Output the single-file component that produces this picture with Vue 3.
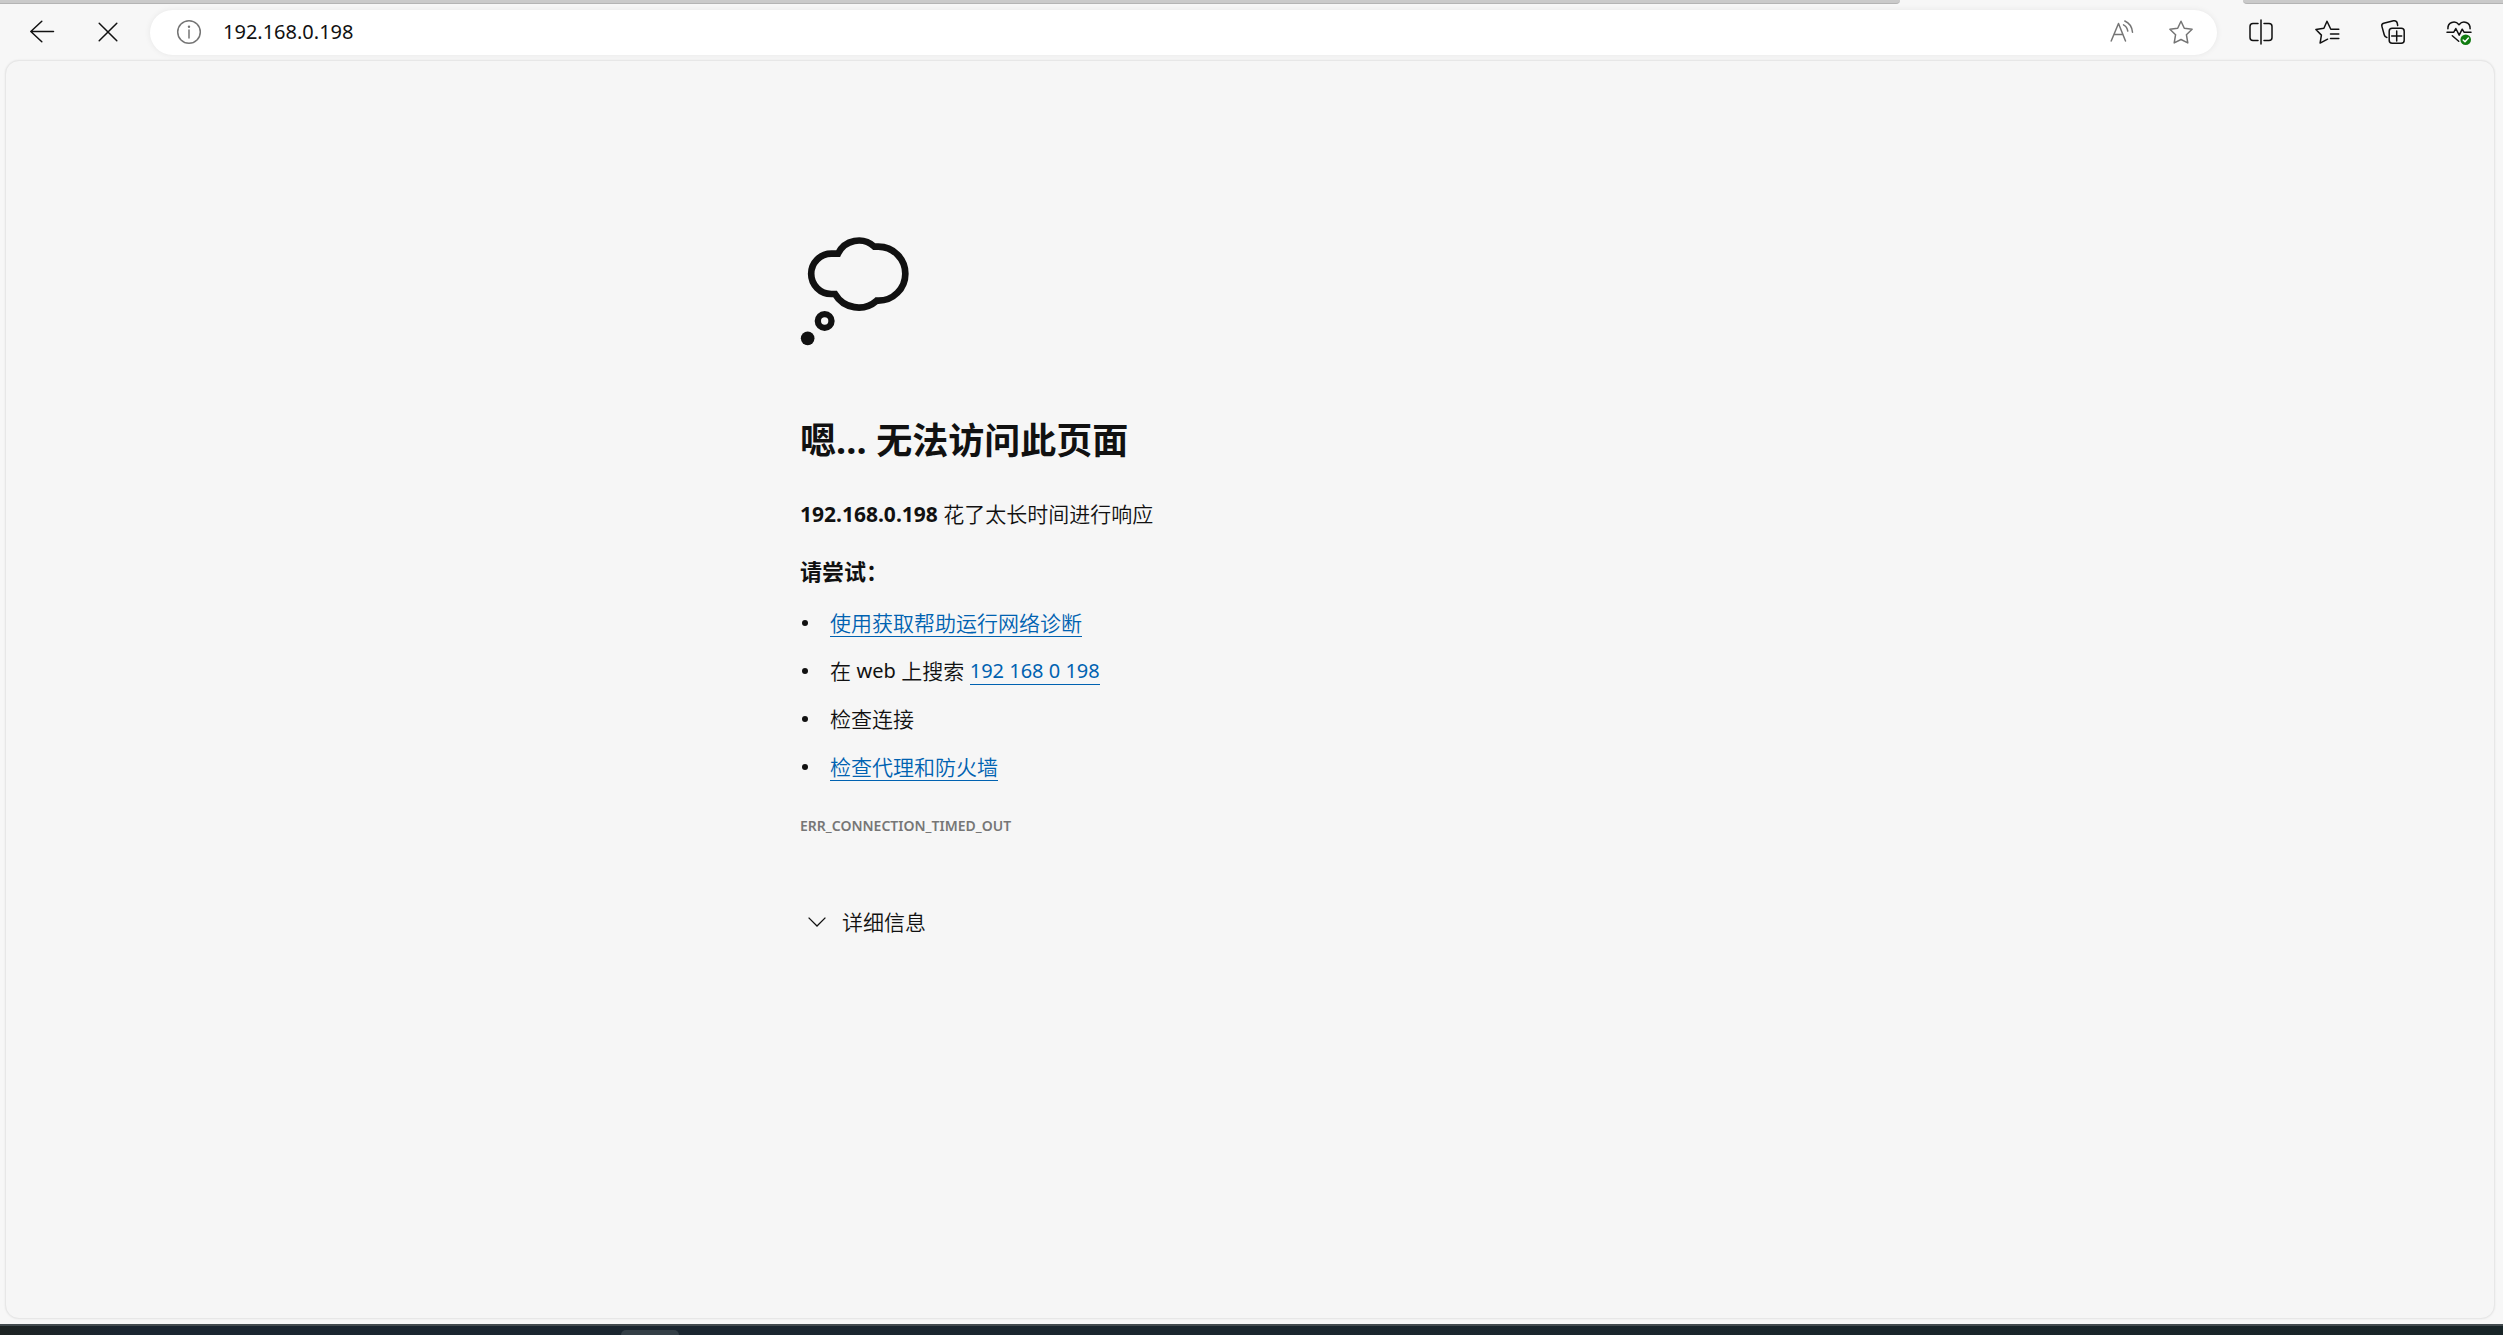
<script setup>
import { ref } from 'vue'

const address = ref('192.168.0.198')
</script>

<template>
  <div class="browser">
    <div class="tabstrip">
      <div class="tabs tabs-before"></div>
      <div class="tab-active"></div>
      <div class="tabs tabs-after"></div>
    </div>

    <header class="toolbar">
      <button class="tool" aria-label="返回">
        <svg class="icon" viewBox="0 0 24 24"><path d="M23.5 11.5H.8M11.8 1.2L.8 11.5l11 10.3" /></svg>
      </button>
      <button class="tool" aria-label="停止">
        <svg class="icon" viewBox="0 0 24 24"><path d="M3.2 3.2l17.6 17.6M20.8 3.2L3.2 20.8" /></svg>
      </button>

      <div class="address">
        <button class="address-tool" aria-label="网站信息">
          <svg class="icon gray" viewBox="0 0 24 24"><circle cx="12" cy="12" r="11.3" /><path d="M12 10v8" /><circle class="dot" cx="12" cy="6.8" r="1.2" /></svg>
        </button>
        <input v-model="address" class="url" type="text" aria-label="地址栏" />
        <button class="address-tool" aria-label="大声朗读">
          <svg class="icon gray" viewBox="0 0 24 24"><path d="M1.2 21L8.5 3.5 15.5 21M4 14.500h9M13.500 4.800c2.300 1.200 3.900 3.500 4.300 6.300M14.800 1c4.200 1.800 7.200 6 7.700 11.200" /></svg>
        </button>
        <button class="address-tool" aria-label="收藏此页">
          <svg class="icon gray" viewBox="0 0 24 24"><path d="M12 1.200l3.300 7 7.800 1.100-5.700 5.400 1.400 8.200-6.800-3.400-6.800 3.400 1.400-8.200L.9 9.300l7.800-1.100z" /></svg>
        </button>
      </div>

      <button class="tool" aria-label="分屏">
        <svg class="icon" viewBox="0 0 24 24"><path d="M12 0v24M9 3.500H4a3 3 0 0 0-3 3v11a3 3 0 0 0 3 3h5M15 3.500h5a3 3 0 0 1 3 3v11a3 3 0 0 1-3 3h-5" /></svg>
      </button>
      <button class="tool" aria-label="收藏夹">
        <svg class="icon" viewBox="0 0 24 24"><path d="M23.800 9.200H15.800L12 1.200 8.900 8.200.9 9.500l5.500 5.600-1.300 8 7.500-3.900M15.500 14h8.300M15.500 18.500h8.300" /></svg>
      </button>
      <button class="tool" aria-label="集锦">
        <svg class="icon" viewBox="0 0 24 24"><path d="M5.900 17.500C4.500 17.300 3.700 16.500 3.300 15L.9 6.400C.5 4.900 1.200 3.700 2.700 3.300L12.500.8c2-.4 3.200.4 3.700 2.200l.5 2.500" /><rect x="8.200" y="8.300" width="15" height="15" rx="3" /><path d="M15.700 11v10M10.700 16h10" /></svg>
      </button>
      <button class="tool" aria-label="浏览器概要">
        <svg class="icon" viewBox="0 0 24 24">
          <path d="M.9 8.800C.6 2.500 7.800-.3 12 4.700 16.200-.3 23.400 2.500 23.100 8.800M0 12.200h6.800l2-3.700 3.400 6.700 3-6 1.800 3H24M5.300 15.800l6.400 5.500" />
          <circle class="badge" cx="18.700" cy="19.700" r="5.300" />
          <path class="check" d="M16.200 20l1.800 1.700 3.400-3.700" />
        </svg>
      </button>
    </header>

    <main class="page">
      <div class="content">
        <svg class="cloud" viewBox="0 0 330 330" aria-hidden="true">
          <path d="M94 53H114A69 69 0 0 1 223 32H235A81 81 0 0 1 235 194H230A82 82 0 0 1 105 174H94A60.500 60.500 0 0 1 94 53Z" />
          <circle class="ring" cx="74" cy="255" r="20.500" />
          <circle class="blob" cx="23" cy="307" r="20.500" />
        </svg>

        <h1>嗯… 无法访问此页面</h1>
        <p class="summary"><strong>192.168.0.198</strong> 花了太长时间进行响应</p>

        <h2>请尝试：</h2>
        <ul class="tips">
          <li><a href="#">使用获取帮助运行网络诊断</a></li>
          <li>在 <span class="latin">web</span> 上搜索 <a class="latin" href="#">192 168 0 198</a></li>
          <li>检查连接</li>
          <li><a href="#">检查代理和防火墙</a></li>
        </ul>

        <p class="code">ERR_CONNECTION_TIMED_OUT</p>

        <button class="details">
          <svg class="chevron" viewBox="0 0 18 10" aria-hidden="true"><path d="M.6.600L9 9l8.400-8.400" /></svg>
          详细信息
        </button>
      </div>
    </main>

    <footer class="taskbar"><span class="task"></span></footer>
  </div>
</template>

<style>
body {
  margin: 0;
  background: #f7f7f7;
}
</style>

<style scoped>
.browser {
  display: flex;
  flex-direction: column;
  min-height: 100vh;
  background: #f7f7f7;
  color: #111;
  font-family: "Noto Sans", "Noto Sans CJK SC", sans-serif;
}

button {
  padding: 0;
  border: 0;
  background: none;
  color: inherit;
  font: inherit;
}

.tabstrip {
  display: flex;
  height: 4px;
}

.tabs {
  box-sizing: border-box;
  background: #cacaca;
  border-bottom: 1px solid #b4b4b4;
}

.tabs-before {
  flex: 1;
  border-bottom-right-radius: 4px;
}

.tab-active {
  width: 343px;
}

.tabs-after {
  width: 260px;
  border-bottom-left-radius: 4px;
}

.toolbar {
  display: flex;
  align-items: center;
  height: 56px;
  padding: 0 11px 0 9px;
}

.tool,
.address-tool {
  display: flex;
  align-items: center;
  justify-content: center;
  flex: none;
  height: 45px;
}

.tool {
  width: 66px;
}

.address-tool {
  width: 59px;
}

.icon {
  width: 24px;
  height: 24px;
  fill: none;
  stroke: #111;
  stroke-width: 1.5;
  stroke-linecap: round;
  stroke-linejoin: round;
  overflow: visible;
}

.gray {
  stroke: #757575;
}

.dot {
  fill: #757575;
  stroke: none;
}

.badge {
  fill: #107c10;
  stroke: none;
}

.check {
  stroke: #fff;
}

.address {
  display: flex;
  align-items: center;
  flex: 1;
  height: 45px;
  margin: 0 11px 0 9px;
  padding: 0 7px 0 9px;
  box-sizing: border-box;
  border-radius: 23px;
  background: #fff;
  box-shadow: 0 0 6px rgba(0, 0, 0, 0.07);
}

.url {
  flex: 1;
  min-width: 0;
  padding: 0 0 0 5px;
  border: 0;
  outline: 0;
  background: none;
  color: #111;
  font: 20px/30px "Noto Sans", sans-serif;
}

.page {
  flex: 1;
  margin: 0 8px 5px 5px;
  border: 1px solid #e7e7e7;
  border-radius: 14px;
  background: #f6f6f6;
  box-shadow: 0 0 2px rgba(0, 0, 0, 0.08);
}

.content {
  max-width: 900px;
  margin: 0 auto;
  padding: 175px 0 40px;
  font-size: 21px;
  line-height: 30px;
  font-weight: 350;
}

.cloud {
  display: block;
  width: 110px;
  height: 110px;
  fill: none;
  stroke: #111;
  stroke-width: 20;
}

.ring {
  stroke-width: 19;
}

.blob {
  fill: #111;
  stroke: none;
}

h1 {
  margin: 71px 0 0;
  font-size: 36px;
  line-height: 48px;
  font-weight: 700;
}

.summary {
  margin: 34px 0 0;
}

.summary strong {
  font-weight: 700;
}

h2 {
  margin: 27px 0 0;
  font-size: 22px;
  line-height: 30px;
  font-weight: 700;
}

.tips {
  display: flex;
  flex-direction: column;
  gap: 18px;
  margin: 22px 0 0;
  padding: 0;
  list-style: none;
}

.tips li {
  display: flex;
  align-items: center;
  min-height: 30px;
  white-space: pre;
}

.tips li::before {
  content: "";
  width: 6px;
  height: 6px;
  margin: 0 22px 0 2px;
  border-radius: 50%;
  background: #111;
}

.tips a {
  border-bottom: 1px solid #0062b1;
  color: #0062b1;
  line-height: 26px;
  text-decoration: none;
}

.latin {
  font-size: 20px;
  font-weight: 400;
}

.code {
  margin: 32px 0 0;
  color: #767676;
  font-size: 14px;
  line-height: 24px;
  font-weight: 600;
}

.details {
  display: flex;
  align-items: center;
  gap: 16px;
  margin: 69px 0 0;
  padding: 0 8px;
}

.chevron {
  width: 18px;
  height: 10px;
  fill: none;
  stroke: #111;
  stroke-width: 1.3;
}

.taskbar {
  display: flex;
  justify-content: center;
  height: 11px;
  box-sizing: border-box;
  padding-right: 1203px;
  border-top: 2px solid #434b4f;
  background: linear-gradient(90deg, #1d2323, #1a2530 5%, #1a262e 50%, #182427);
}

.task {
  width: 58px;
  height: 5px;
  margin-top: 4px;
  border-radius: 6px 6px 0 0;
  background: #333e46;
}
</style>
